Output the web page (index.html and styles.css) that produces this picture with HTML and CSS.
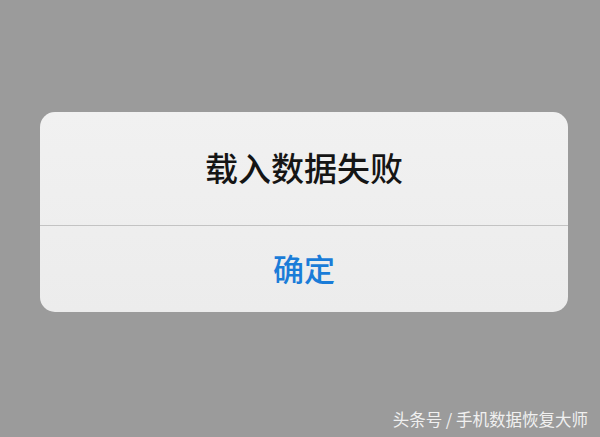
FILE: index.html
```html
<!DOCTYPE html>
<html lang="zh">
<head>
<meta charset="utf-8">
<link rel="stylesheet" href="styles.css">
</head>
<body>
<div class="screen">
  <div class="dialog">
    <div class="title">载入数据失败</div>
    <div class="button">确定</div>
  </div>
  <div class="watermark">头条号 / 手机数据恢复大师</div>
</div>
</body>
</html>
```
FILE: styles.css
```css
html, body {
  margin: 0;
  padding: 0;
}
body {
  width: 600px;
  height: 437px;
  overflow: hidden;
  background: #9b9b9b;
  font-family: "Noto Sans CJK SC", "Noto Sans", sans-serif;
}
.screen {
  width: 600px;
  height: 437px;
  display: flex;
  flex-direction: column;
  box-sizing: border-box;
  padding: 112px 32px 0 40px;
}
.dialog {
  width: 528px;
  height: 200px;
  border-radius: 15px;
  background: linear-gradient(#f1f1f1, #ececec);
  display: flex;
  flex-direction: column;
  overflow: hidden;
}
.title {
  height: 114px;
  box-sizing: border-box;
  border-bottom: 1px solid #c3c3c3;
  display: flex;
  align-items: center;
  justify-content: center;
  font-size: 33px;
  font-weight: 500;
  color: #151515;
  padding-bottom: 3px;
}
.button {
  flex: 1;
  display: flex;
  align-items: center;
  justify-content: center;
  font-size: 31px;
  font-weight: 500;
  color: #1a7cd8;
  padding-bottom: 3px;
}
.watermark {
  margin-top: 95px;
  align-self: flex-end;
  font-size: 16.5px;
  color: #f0f0f0;
  line-height: 24px;
  margin-right: -20px;
}
```
